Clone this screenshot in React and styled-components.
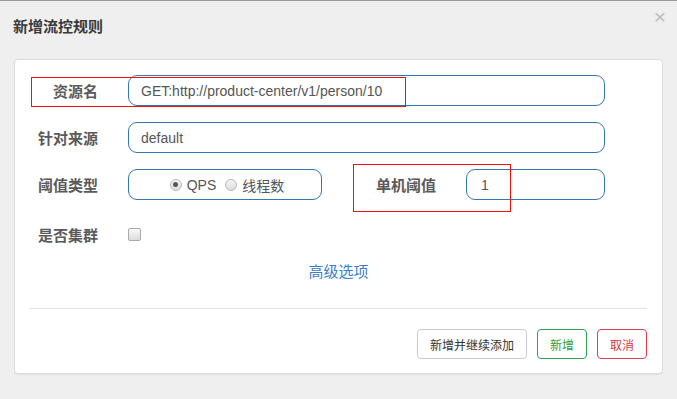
import React from 'react'
import styled, { createGlobalStyle } from 'styled-components'

const GlobalStyle = createGlobalStyle`
  html, body {
    margin: 0;
    padding: 0;
    background: #efefef;
    font-family: "Liberation Sans", "Noto Sans CJK SC", sans-serif;
  }
`

const Modal = styled.div`
  width: 677px;
  height: 399px;
  box-sizing: border-box;
  border-top: 1px solid #9a9a9a;
  background: #efefef;
  position: relative;
`

const Header = styled.div`
  height: 58px;
  padding: 0 11px 0 13px;
  display: flex;
  justify-content: space-between;
  align-items: flex-start;
`

const Title = styled.h4`
  margin: 16px 0 0;
  font-size: 15px;
  line-height: 20px;
  font-weight: 600;
  color: #3a3a3a;
`

const Close = styled.span`
  margin-top: 5px;
  font-size: 21px;
  line-height: 22px;
  color: #bdbdbd;
`

const Panel = styled.div`
  margin: 0 14px;
  background: #fff;
  border: 1px solid #dcdcdc;
  border-radius: 4px;
  box-shadow: 0 1px 1px rgba(0, 0, 0, 0.06);
  padding: 15px 15px 14px;
`

const Row = styled.div`
  display: flex;
  align-items: center;
  height: 31px;
  margin-top: ${(p) => p.$gap || 0}px;
`

const Label = styled.label`
  width: ${(p) => p.$width || 68}px;
  margin-right: 30px;
  text-align: right;
  font-size: 15px;
  font-weight: 600;
  color: #5a5a5a;
  white-space: nowrap;
  flex-shrink: 0;
`

const Input = styled.div`
  width: ${(p) => p.$width}px;
  height: 31px;
  box-sizing: border-box;
  border: 1px solid #3776b4;
  border-radius: 9px;
  padding: 0 ${(p) => p.$pad || 12}px;
  display: flex;
  align-items: center;
  font-size: 14px;
  color: #555;
`

const RadioBox = styled(Input)`
  justify-content: center;
  padding-left: 16px;
`

const RadioDot = styled.span`
  width: 12px;
  height: 12px;
  box-sizing: border-box;
  border-radius: 50%;
  border: 1px solid #b8b8b8;
  background: linear-gradient(#f6f6f6, #dddddd);
  display: inline-flex;
  align-items: center;
  justify-content: center;
  margin-right: 5px;
  &::after {
    content: '';
    width: 5px;
    height: 5px;
    border-radius: 50%;
    background: ${(p) => (p.$checked ? '#555' : 'transparent')};
  }
`

const RadioText = styled.span`
  font-size: 14px;
  color: #555;
  margin-right: 9px;
  &:last-child {
    margin-right: 0;
  }
`

const Check = styled.span`
  width: 13px;
  height: 13px;
  box-sizing: border-box;
  border: 1px solid #a9a9a9;
  border-radius: 2px;
  background: linear-gradient(#fafafa, #dcdcdc);
`

const Link = styled.div`
  margin-top: 12px;
  text-align: center;
  font-size: 15px;
  line-height: 20px;
  color: #3b80c6;
`

const Divider = styled.div`
  margin-top: 26px;
  border-top: 1px solid #e3e3e3;
`

const Footer = styled.div`
  margin-top: 20px;
  display: flex;
  justify-content: flex-end;
  gap: 10px;
`

const Button = styled.button`
  width: ${(p) => p.$width || 50}px;
  height: 30px;
  box-sizing: border-box;
  padding: 0;
  background: #fff;
  border: 1px solid ${(p) => p.$color || '#ccc'};
  color: ${(p) => p.$text || '#333'};
  border-radius: 4px;
  font-family: inherit;
  font-size: 12px;
`

const Mark = styled.div`
  position: absolute;
  border: 1px solid #ee1111;
  pointer-events: none;
`

export default function App() {
  return (
    <Modal>
      <GlobalStyle />
      <Header>
        <Title>新增流控规则</Title>
        <Close>×</Close>
      </Header>
      <Panel>
        <Row>
          <Label>资源名</Label>
          <Input $width={477}>GET:http://product-center/v1/person/10</Input>
        </Row>
        <Row $gap={16}>
          <Label>针对来源</Label>
          <Input $width={477}>default</Input>
        </Row>
        <Row $gap={16}>
          <Label>阈值类型</Label>
          <RadioBox $width={194}>
            <RadioDot $checked />
            <RadioText>QPS</RadioText>
            <RadioDot />
            <RadioText>线程数</RadioText>
          </RadioBox>
          <Label $width={114}>单机阈值</Label>
          <Input $width={139} $pad={14}>1</Input>
        </Row>
        <Row $gap={19}>
          <Label>是否集群</Label>
          <Check />
        </Row>
        <Link>高级选项</Link>
        <Divider />
        <Footer>
          <Button $width={110}>新增并继续添加</Button>
          <Button $color="#2ea44f" $text="#2a9d45">新增</Button>
          <Button $color="#e03f4f" $text="#d9363e">取消</Button>
        </Footer>
      </Panel>
      <Mark style={{ left: 31, top: 76, width: 373, height: 28 }} />
      <Mark style={{ left: 353, top: 163, width: 156, height: 46 }} />
    </Modal>
  )
}
